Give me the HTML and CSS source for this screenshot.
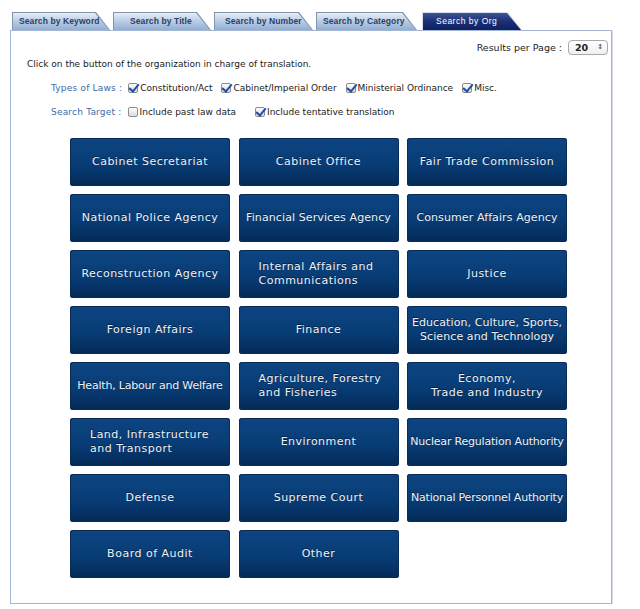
FILE: index.html
```html
<!DOCTYPE html>
<html lang="en">
<head>
    <meta charset="UTF-8">
    <title>Search by Org</title>
    <link rel="stylesheet" href="styles.css">
</head>
<body>
<div id="wrap">
    <div class="tabs">
        <div class="tab"><span>Search by Keyword</span></div>
        <div class="tab"><span>Search by Title</span></div>
        <div class="tab"><span>Search by Number</span></div>
        <div class="tab"><span>Search by Category</span></div>
        <div class="tab active"><span>Search by Org</span></div>
    </div>
    <div class="panel">
        <div class="perpage">
            Results per Page :
            <div class="sel">20 <span class="arr">&#8597;</span></div>
        </div>
        <p class="intro">Click on the button of the organization in charge of translation.</p>
        <div class="opts">
            <span class="lbl">Types of Laws :</span>
            <label><input type="checkbox" checked>Constitution/Act</label>
            <label><input type="checkbox" checked>Cabinet/Imperial Order</label>
            <label><input type="checkbox" checked>Ministerial Ordinance</label>
            <label><input type="checkbox" checked>Misc.</label>
        </div>
        <div class="opts">
            <span class="lbl">Search Target :</span>
            <label><input type="checkbox">Include past law data</label>
            <label class="wide"><input type="checkbox" checked>Include tentative translation</label>
        </div>
        <div class="orgs">
            <button>Cabinet Secretariat</button>
            <button>Cabinet Office</button>
            <button>Fair Trade Commission</button>
            <button>National Police Agency</button>
            <button class="mid">Financial Services Agency</button>
            <button class="mid">Consumer Affairs Agency</button>
            <button>Reconstruction Agency</button>
            <button class="two">Internal Affairs and<br>Communications</button>
            <button>Justice</button>
            <button>Foreign Affairs</button>
            <button>Finance</button>
            <button class="mid">Education, Culture, Sports,<br>Science and Technology</button>
            <button class="tight">Health, Labour and Welfare</button>
            <button class="two">Agriculture, Forestry<br>and Fisheries</button>
            <button>Economy,<br>Trade and Industry</button>
            <button class="two">Land, Infrastructure<br>and Transport</button>
            <button>Environment</button>
            <button class="tight">Nuclear Regulation Authority</button>
            <button>Defense</button>
            <button>Supreme Court</button>
            <button class="tight">National Personnel Authority</button>
            <button>Board of Audit</button>
            <button>Other</button>
        </div>
    </div>
</div>
</body>
</html>
```
FILE: styles.css
```css
body {
    margin: 0;
    background: #fff;
    font-family: "DejaVu Sans", Verdana, sans-serif;
    color: #222;
}

#wrap {
    padding: 12px 0 0 10px;
    width: 602px;
}

.tabs {
    display: flex;
    gap: 3px;
    padding-left: 2px;
    height: 18px;
}

.tab {
    width: 100px;
    height: 18px;
    background: #8494ab;
    clip-path: polygon(0 0, calc(100% - 14px) 0, 100% 100%, 0 100%);
}

.tab span {
    display: block;
    margin: 1px 0 0 1px;
    height: 17px;
    background: linear-gradient(#e6eef7, #b3c8e2 55%, #93afd3);
    clip-path: polygon(0 0, calc(100% - 15px) 0, calc(100% - 1px) 100%, 0 100%);
    font-family: "Liberation Sans", Arial, sans-serif;
    font-size: 8.5px;
    font-weight: bold;
    letter-spacing: 0.1px;
    color: #2b4068;
    line-height: 17px;
    padding-left: 6px;
    white-space: nowrap;
}

.tab:nth-child(1) { width: 98px; }
.tab:nth-child(2) { width: 98px; }
.tab:nth-child(2) span { padding-left: 16px; }
.tab:nth-child(3) { width: 99px; }
.tab:nth-child(3) span { padding-left: 10px; }
.tab:nth-child(4) { width: 101px; }
.tab:nth-child(4) span { padding-left: 6px; }
.tab:nth-child(5) { width: 100px; margin-left: 2px; }

.tab.active {
    background: #d9dde6;
}

.tab.active span {
    background: linear-gradient(#3a5597, #1b2f74 50%, #0f2166);
    color: #fff;
    padding-left: 13px;
    font-weight: normal;
    letter-spacing: 0.5px;
}

.panel {
    border: 1px solid #a3b6d3;
    box-shadow: 1px 1px 0 #d3dbe8;
    height: 572px;
    font-size: 9px;
}

.perpage {
    display: flex;
    justify-content: flex-end;
    align-items: center;
    gap: 6px;
    padding: 8px 3px 0 0;
    font-size: 9.5px;
    height: 17px;
}

.sel {
    width: 32px;
    height: 13px;
    border: 1px solid #a9a9a9;
    border-radius: 4px;
    background: linear-gradient(#fff, #f0f0f0);
    font-size: 9.5px;
    font-weight: bold;
    line-height: 13px;
    padding-left: 6px;
    display: flex;
    justify-content: space-between;
    box-sizing: content-box;
}

.sel .arr {
    font-size: 7px;
    color: #555;
    padding-right: 4px;
}

.intro {
    margin: 2px 0 0 16px;
    font-size: 9px;
    line-height: 12px;
}

.opts {
    display: flex;
    align-items: center;
    margin: 12px 0 0 40px;
    font-size: 9px;
    height: 12px;
}

.opts .lbl {
    color: #3e6aa8;
    margin-right: 6px;
    letter-spacing: 0.2px;
}

.opts label {
    display: flex;
    align-items: center;
    margin-right: 9px;
}

.opts label.wide {
    margin-left: 10px;
}

.opts input {
    appearance: none;
    position: relative;
    width: 10px;
    height: 10px;
    margin: 0 2px 0 0;
    border: 1px solid #8d8d8d;
    border-radius: 2px;
    background: linear-gradient(#fdfdfd, #dcdcdc);
}

.opts input:checked::after {
    content: "";
    position: absolute;
    left: 2px;
    top: -2px;
    width: 4px;
    height: 8px;
    border: solid #1f4fa8;
    border-width: 0 2.5px 2.5px 0;
    transform: rotate(40deg);
}

.orgs {
    display: grid;
    grid-template-columns: repeat(3, 160px);
    grid-auto-rows: 48px;
    column-gap: 8.5px;
    row-gap: 8px;
    margin: 20px 0 0 59px;
}

.orgs button {
    border: 0;
    border-radius: 3px;
    background: linear-gradient(#0d4582, #083c75 55%, #042a57);
    color: #eef2f8;
    font-family: "DejaVu Sans", Verdana, sans-serif;
    font-size: 11px;
    letter-spacing: 0.5px;
    line-height: 14px;
    padding: 0 2px;
    box-shadow: 0 0 0 1px #0a2d58 inset;
    text-shadow: 0 -1px 0 #032042;
}

.orgs button.mid {
    letter-spacing: 0.1px;
    font-size: 11px;
}

.orgs button.tight {
    letter-spacing: -0.2px;
    font-size: 11px;
}

.orgs button.two {
    text-align: left;
    padding-left: 20px;
}
```
